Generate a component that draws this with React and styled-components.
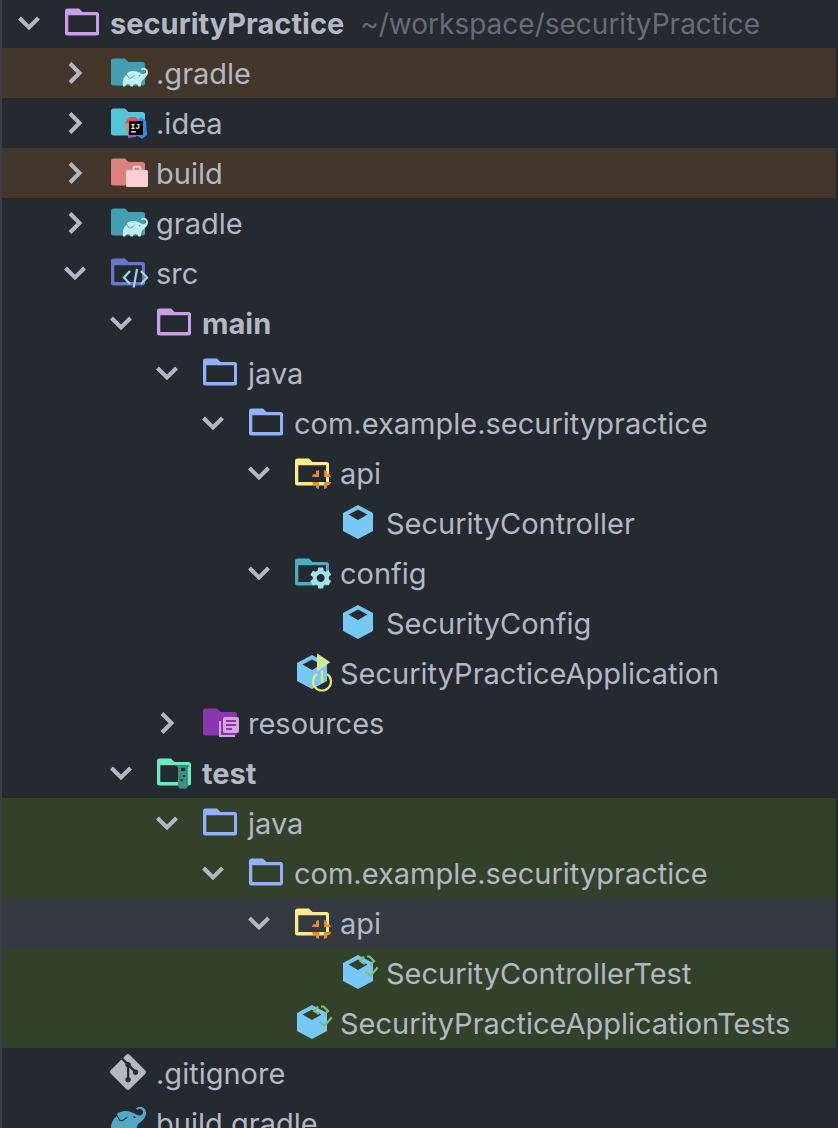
import React, { useState } from "react";
import styled, { createGlobalStyle } from "styled-components";
import { SiGit, SiGradle } from "react-icons/si";
import { MdSettings } from "react-icons/md";

const colors = {
  bg: "#252930",
  edge: "#3b3f47",
  text: "#b4b8c5",
  muted: "#686c7a",
  excluded: "#43362b",
  test: "#33412b",
  selected: "#353942",
};

const tree = {
  name: "securityPractice",
  icon: "module",
  bold: true,
  path: "~/workspace/securityPractice",
  open: true,
  children: [
    { name: ".gradle", icon: "gradleFolder", tone: "excluded", children: [] },
    { name: ".idea", icon: "idea", children: [] },
    { name: "build", icon: "build", tone: "excluded", children: [] },
    { name: "gradle", icon: "gradleFolder", children: [] },
    {
      name: "src",
      icon: "src",
      open: true,
      children: [
        {
          name: "main",
          icon: "module",
          bold: true,
          open: true,
          children: [
            {
              name: "java",
              icon: "folder",
              open: true,
              children: [
                {
                  name: "com.example.securitypractice",
                  icon: "folder",
                  open: true,
                  children: [
                    {
                      name: "api",
                      icon: "api",
                      open: true,
                      children: [{ name: "SecurityController", icon: "javaClass" }],
                    },
                    {
                      name: "config",
                      icon: "config",
                      open: true,
                      children: [{ name: "SecurityConfig", icon: "javaClass" }],
                    },
                    { name: "SecurityPracticeApplication", icon: "bootClass" },
                  ],
                },
              ],
            },
            { name: "resources", icon: "resources", children: [] },
          ],
        },
        {
          name: "test",
          icon: "test",
          bold: true,
          open: true,
          children: [
            {
              name: "java",
              icon: "folder",
              tone: "test",
              open: true,
              children: [
                {
                  name: "com.example.securitypractice",
                  icon: "folder",
                  tone: "test",
                  open: true,
                  children: [
                    {
                      name: "api",
                      icon: "api",
                      tone: "selected",
                      open: true,
                      children: [
                        { name: "SecurityControllerTest", icon: "testClass", tone: "test" },
                      ],
                    },
                    { name: "SecurityPracticeApplicationTests", icon: "testClass", tone: "test" },
                  ],
                },
              ],
            },
          ],
        },
      ],
    },
    { name: ".gitignore", icon: "git" },
    { name: "build.gradle", icon: "gradle" },
  ],
};

const SOLID = "M1 8a2.500 2.500 0 0 1 2.500-2.500H15l3.500 3.500h14a2.500 2.500 0 0 1 2.500 2.500V30a2.500 2.500 0 0 1-2.500 2.500h-29A2.500 2.500 0 0 1 1 30z";
const HOLE = "M4.300 12.300v16.700h27.700v-16.700z";

const Solid = ({ color }) => <path d={SOLID} fill={color} />;
const Outline = ({ color }) => <path d={SOLID + HOLE} fill={color} fillRule="evenodd" />;

const Cube = () => (
  <path
    d="M18 2l15 8v18l-15 8-15-8V10zM18 6.500l-9.500 5L18 17l9.500-5.500z"
    fill="#78c8f6"
    fillRule="evenodd"
  />
);

const icons = {
  module: <Outline color="#c89fe8" />,
  folder: <Outline color="#92b1fb" />,
  gradleFolder: (
    <>
      <Solid color="#459eb0" />
      <SiGradle x="12.500" y="11.500" size="25.500" color="#c3edf3" />
    </>
  ),
  idea: (
    <>
      <Solid color="#57c3d8" />
      <path d="M19 14h7l3 4-9 6-5-4z" fill="#f0476b" />
      <path d="M16 21l5-3v11l-4-1z" fill="#f58a2c" />
      <path d="M18 28h10l-2 6-8 1z" fill="#9c5bb4" />
      <path d="M27 18l4-4 5 4 1 14-5 4-6-4z" fill="#3b86e8" />
      <path d="M19 18h14v14H19z" fill="#000" />
      <text x="20.500" y="25.500" fill="#fff" fontFamily="Liberation Mono, monospace" fontSize="8" fontWeight="700">
        IJ
      </text>
      <path d="M21 28.200h5v1.300h-5z" fill="#fff" />
    </>
  ),
  build: (
    <>
      <Solid color="#db807f" />
      <path d="M23.500 18v-2.500q0-1.700 1.700-1.700h3.600q1.700 0 1.700 1.700V18" fill="none" stroke="#f8d0d4" strokeWidth="2" />
      <rect x="16" y="17" width="22" height="17" rx="1.500" fill="#f8d0d4" />
    </>
  ),
  src: (
    <>
      <Outline color="#6975c5" />
      <path d="M20 18l-6 6.500 6 6.500M31 18l6 6.500-6 6.500M27 16l-3.300 18.500" fill="none" stroke="#8fdcfc" strokeWidth="2.200" />
    </>
  ),
  api: (
    <>
      <Outline color="#fdec8b" />
      <path
        d="M22 18l3-1v7h-7l1-2.800h3zM30 17l3 1v3.200h3l1 2.800h-7zM18 29h7v7l-3-1v-3.200h-3zM30 29h7l-1 2.800h-3V35l-3 1z"
        fill="#e8892e"
      />
    </>
  ),
  config: (
    <>
      <Outline color="#4badc2" />
      <MdSettings x="13.500" y="11.800" size="26.400" color="#a0e3eb" />
    </>
  ),
  javaClass: <Cube />,
  bootClass: (
    <>
      <Cube />
      <path d="M23 .3v18l13.300-9z" fill="#d0ea9a" />
      <path d="M23 21a9 9 0 1 0 10 0M28 17.500V30" fill="none" stroke="#e2ea6c" strokeWidth="2.200" />
    </>
  ),
  resources: (
    <>
      <Solid color="#8b35ae" />
      <path d="M18 18v15h15" fill="none" stroke="#d6a4e0" strokeWidth="2" />
      <rect x="21" y="14" width="16" height="16" rx="2" fill="#d6a4e0" />
      <path d="M24 18h10M24 22h10M24 26h6" stroke="#8b35ae" strokeWidth="2" />
    </>
  ),
  test: (
    <>
      <Outline color="#6deabf" />
      <path d="M21 12.300h12v2h-1v18q0 3.400-3.400 3.400h-3.200q-3.400 0-3.400-3.400v-18h-1z" fill="#3d9080" />
      <path d="M25 14.700h4.300V18H25zM27 22h2.300v2H27zM24.700 26h2v2.300h-2z" fill={colors.bg} />
    </>
  ),
  testClass: (
    <>
      <Cube />
      <path
        d="M24 3.500L20.500 8l4.500 3M27 3.500h2.500L34 8l-4 4M25.700 18.500l4.600 4.500 7.400-8.500"
        fill="none"
        stroke="#80c274"
        strokeWidth="2.200"
      />
    </>
  ),
  git: <SiGit x="0" y="1" size="36" color={colors.text} />,
  gradle: <SiGradle x="1" y="-1" size="35" color="#52a9c6" />,
};

const TreeNode = ({ node, level }) => {
  const [open, setOpen] = useState(Boolean(node.open));

  return (
    <li>
      <Row $level={level} $tone={node.tone}>
        {node.children ? (
          <Toggle aria-label={"Toggle " + node.name} aria-expanded={open} onClick={() => setOpen(!open)}>
            <Chevron viewBox="0 0 24 24" $open={open}>
              <path d="M7 2.500l9.500 9.500L7 21.500" />
            </Chevron>
          </Toggle>
        ) : (
          <Spacer />
        )}
        <Icon viewBox="0 0 40 40" aria-hidden="true">
          {icons[node.icon]}
        </Icon>
        <Name $bold={node.bold}>{node.name}</Name>
        {node.path && <Path>{node.path}</Path>}
      </Row>
      {open && node.children && node.children.length > 0 && (
        <List>
          {node.children.map((child) => (
            <TreeNode key={child.name} node={child} level={level + 1} />
          ))}
        </List>
      )}
    </li>
  );
};

const App = () => {
  return (
    <>
      <GlobalStyle />
      <Panel>
        <List>
          <TreeNode node={tree} level={0} />
        </List>
      </Panel>
    </>
  );
};

const GlobalStyle = createGlobalStyle`
  * {
    box-sizing: border-box;
  }

  body {
    margin: 0;
    background: ${colors.bg};
    color: ${colors.text};
    font-family: Inter, sans-serif;
  }
`;

const Panel = styled.main`
  height: 100vh;
  overflow: hidden;
  padding-right: 2px;
  border-left: 2px solid ${colors.edge};

  > ul {
    margin-top: -2px;
  }
`;

const List = styled.ul`
  margin: 0;
  padding: 0;
  list-style: none;
`;

const Row = styled.div`
  display: flex;
  align-items: center;
  height: 50px;
  padding-left: ${({ $level }) => 4 + $level * 46}px;
  background: ${({ $tone }) => colors[$tone] || "transparent"};
  white-space: nowrap;
`;

const Toggle = styled.button`
  display: flex;
  align-items: center;
  justify-content: center;
  flex: none;
  width: 46px;
  height: 50px;
  padding: 0;
  border: 0;
  background: none;
  color: inherit;
  cursor: pointer;
`;

const Spacer = styled.span`
  flex: none;
  width: 46px;
`;

const Chevron = styled.svg`
  width: 24px;
  height: 24px;
  fill: none;
  stroke: currentColor;
  stroke-width: 4;
  transform: ${({ $open }) => ($open ? "rotate(90deg)" : "none")};
`;

const Icon = styled.svg`
  flex: none;
  width: 40px;
  height: 40px;
  margin: 0 6px 0 12px;
`;

const Name = styled.span`
  padding-top: 2px;
  font-size: 29px;
  line-height: 34px;
  font-weight: ${({ $bold }) => ($bold ? 700 : 400)};
`;

const Path = styled.span`
  padding-top: 2px;
  margin-left: 16px;
  font-size: 28px;
  line-height: 34px;
  color: ${colors.muted};
`;

export default App;
